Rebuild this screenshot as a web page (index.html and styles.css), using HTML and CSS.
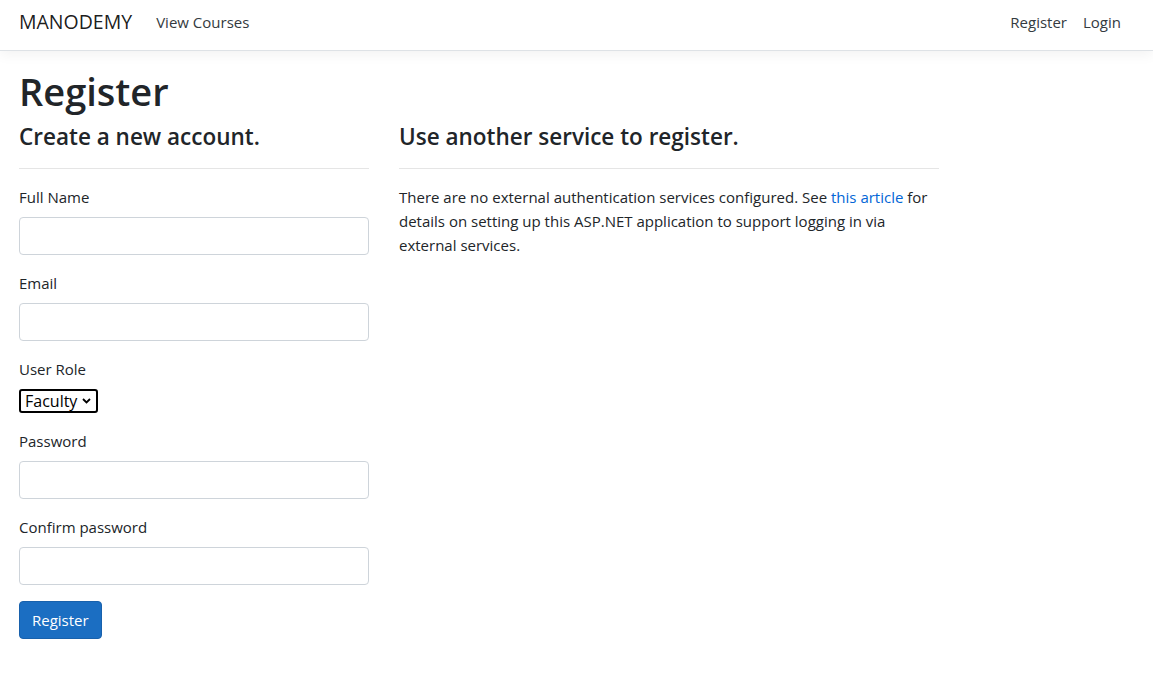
FILE: index.html
```html
<!DOCTYPE html>
<html lang="en">
<head>
<meta charset="utf-8">
<title>Register - MANODEMY</title>
<link rel="stylesheet" href="styles.css">
</head>
<body>
<header class="navbar">
  <div class="nav-left">
    <a class="brand" href="#">MANODEMY</a>
    <a class="nav-link" href="#">View Courses</a>
  </div>
  <div class="nav-right">
    <a class="nav-link" href="#">Register</a>
    <a class="nav-link" href="#">Login</a>
  </div>
</header>
<main class="main">
  <h1 class="title">Register</h1>
  <div class="row">
    <div class="col-form">
      <form>
        <h4 class="subtitle">Create a new account.</h4>
        <hr class="rule">
        <div class="form-group">
          <label class="label">Full Name</label>
          <input class="form-control" type="text">
        </div>
        <div class="form-group">
          <label class="label">Email</label>
          <input class="form-control" type="email">
        </div>
        <div class="form-group">
          <label class="label">User Role</label>
          <div class="select-wrap">
            <select class="select">
              <option>Faculty</option>
              <option>Student</option>
            </select>
            <svg class="chev" width="9" height="6" viewBox="0 0 9 6"><path d="M1 1 L4.5 4.5 L8 1" fill="none" stroke="#000" stroke-width="1.8"/></svg>
          </div>
        </div>
        <div class="form-group">
          <label class="label">Password</label>
          <input class="form-control" type="password">
        </div>
        <div class="form-group">
          <label class="label">Confirm password</label>
          <input class="form-control" type="password">
        </div>
        <button type="button" class="btn">Register</button>
      </form>
    </div>
    <div class="col-ext">
      <section>
        <h4 class="subtitle">Use another service to register.</h4>
        <hr class="rule">
        <p class="para">There are no external authentication services configured. See <a class="link" href="#">this article</a> for details on setting up this ASP.NET application to support logging in via external services.</p>
      </section>
    </div>
  </div>
</main>
</body>
</html>
```

FILE: styles.css
```css
* { box-sizing: border-box; }
html, body { margin: 0; padding: 0; }
body {
  font-family: "Open Sans", "Noto Sans", "Liberation Sans", sans-serif;
  font-size: 15px;
  line-height: 24px;
  color: #212529;
  background: #fff;
}
a { text-decoration: none; }

.navbar {
  height: 51px;
  display: flex;
  align-items: flex-start;
  justify-content: space-between;
  padding: 7px 24px 0 19px;
  background: #fff;
  border-bottom: 1px solid #dee2e6;
  box-shadow: 0 4px 12px rgba(0,0,0,.05);
}
.nav-left, .nav-right { display: flex; align-items: center; height: 30px; }
.brand {
  font-size: 19.5px;
  color: rgba(0,0,0,.9);
  margin-right: 16px;
  line-height: 30px;
}
.nav-link {
  color: #343a40;
  padding: 3px 8px;
  line-height: 24px;
}

.main { padding: 16px 19px 0; }
.title {
  margin: 0 0 8px;
  font-size: 38px;
  font-weight: 600;
  line-height: 48px;
}
.row { display: flex; gap: 30px; }
.col-form { width: 350px; }
.col-ext { width: 540px; }
.subtitle {
  margin: 0;
  font-size: 22.5px;
  font-weight: 600;
  line-height: 28.8px;
}
.rule {
  margin: 16px 0;
  border: 0;
  border-top: 1px solid rgba(0,0,0,.1);
}
.form-group { margin-bottom: 16px; }
.label { display: block; margin-bottom: 8px; }
.form-control {
  display: block;
  width: 100%;
  height: 38px;
  padding: 6px 12px;
  font: inherit;
  border: 1px solid #ced4da;
  border-radius: 4px;
  background: #fff;
}
.select-wrap { position: relative; display: inline-block; height: 24px; vertical-align: top; }
.select {
  -webkit-appearance: none;
  appearance: none;
  display: block;
  height: 24px;
  width: 79px;
  padding: 0 0 0 4px;
  font: inherit;
  font-size: 16px;
  line-height: 20px;
  color: #000;
  border: 2px solid #000;
  border-radius: 3px;
  background: #fff;
}
.chev { position: absolute; right: 7px; top: 9px; pointer-events: none; }
.btn {
  font: inherit;
  color: #fff;
  background: #1b6ec2;
  border: 1px solid #1861ac;
  border-radius: 4px;
  padding: 6px 12px;
  line-height: 24px;
}
.para { margin: 0 0 16px; }
.link { color: #0366d6; }
```
